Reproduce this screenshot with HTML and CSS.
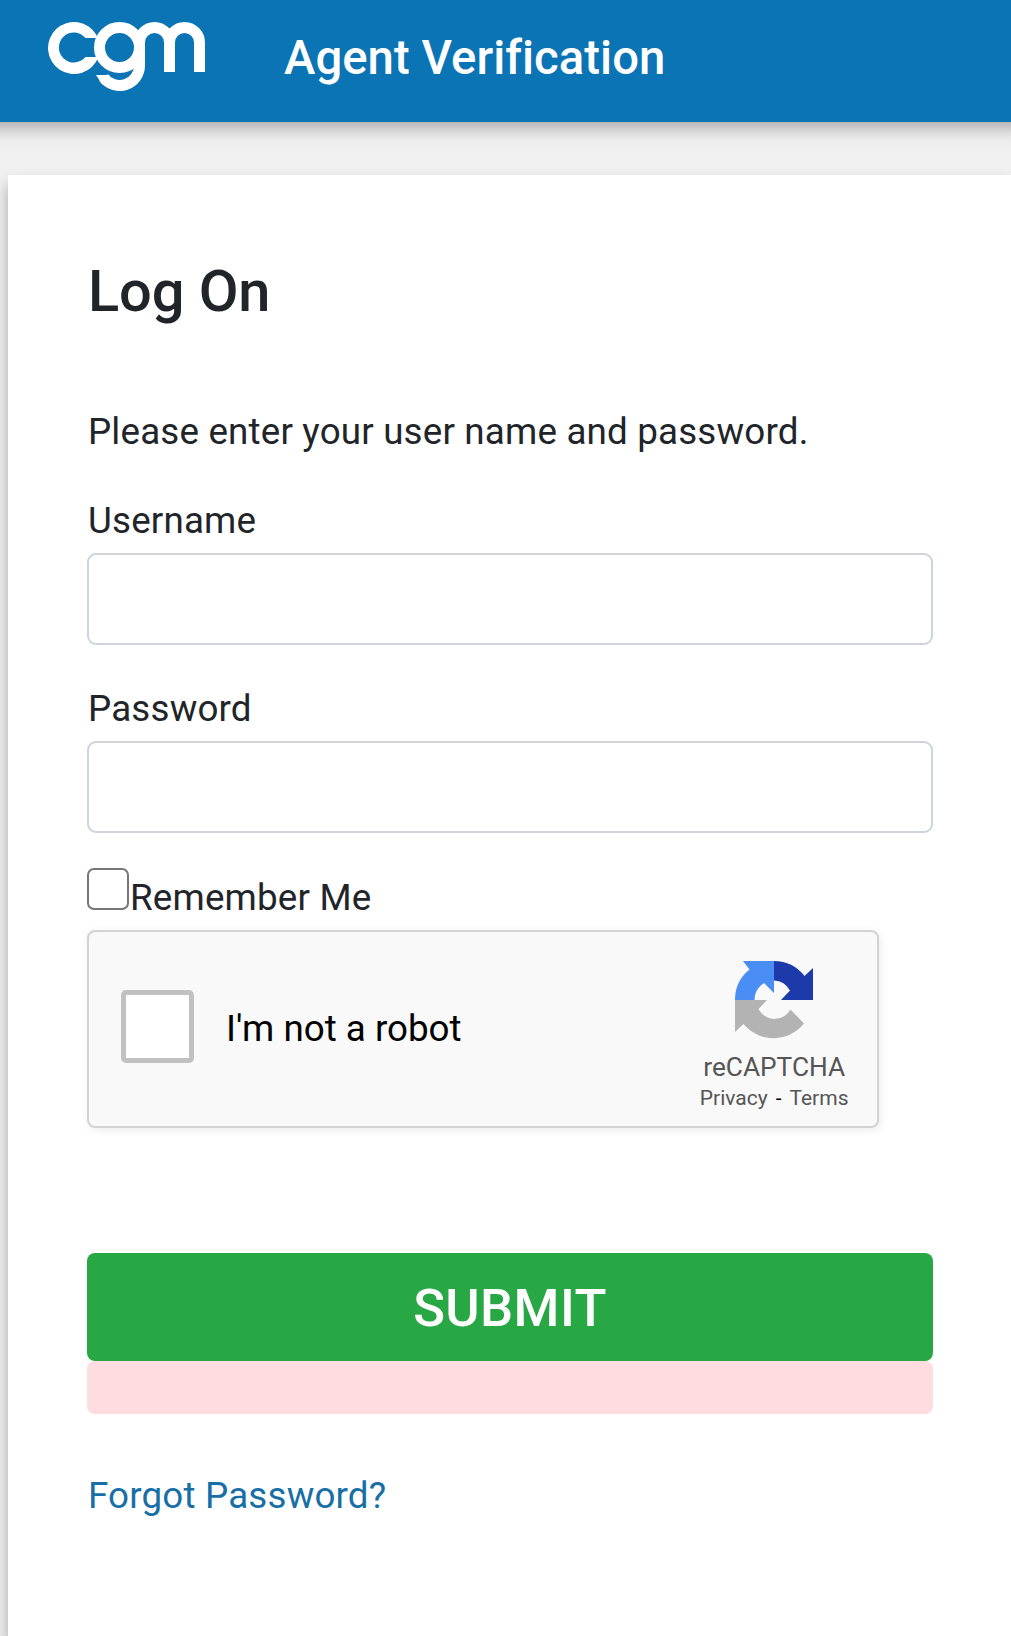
FILE: index.html
```html
<!DOCTYPE html>
<html lang="en">
<head>
<meta charset="utf-8">
<title>Agent Verification</title>
<link rel="stylesheet" href="styles.css">
</head>
<body>
<header class="header">
  <svg class="logo" viewBox="48 22 157 69" width="157" height="69" role="img" aria-label="cgm">
    <path fill="#fff" d="M97 38H85.500A15 15 0 1 0 85.500 57H98.400A26 26 0 1 1 96.500 34.900Z"/>
    <g fill="none" stroke="#fff" stroke-width="11">
      <circle cx="119.500" cy="47.500" r="20"/>
      <path d="M139.500 47V65.500A20 20 0 0 1 103.500 77.500"/>
      <path d="M139.500 50V42.500A15 15 0 0 1 169.500 42.500V72M169.500 50V42.500A15 15 0 0 1 199.500 42.500V72"/>
    </g>
    <path fill="#fff" d="M96 75H109L112 80L102 84Z"/>
  </svg>
  <div class="brand">Agent Verification</div>
</header>
<main class="card">
  <h1 class="title">Log On</h1>
  <p class="intro">Please enter your user name and password.</p>
  <form class="form">
    <div class="field">
      <label class="label" for="user">Username</label>
      <input class="input" id="user" type="text">
    </div>
    <div class="field">
      <label class="label" for="pass">Password</label>
      <input class="input" id="pass" type="password">
    </div>
    <div class="remember">
      <input class="check" id="remember" type="checkbox">
      <label class="remember-label" for="remember">Remember Me</label>
    </div>
    <div class="captcha">
      <span class="captcha-box"></span>
      <span class="captcha-text">I'm not a robot</span>
      <div class="captcha-brand">
        <svg width="78" height="78" viewBox="0 0 78 78" aria-hidden="true">
          <path fill="#1c3aa9" d="M39 0A39 39 0 0 1 69.500 15L78 7V39H46L55 29.500A19.500 19.500 0 0 0 39 19.500Z"/>
          <path fill="#4a8df5" d="M8 0H39V32L29 22A20 20 0 0 0 19.500 39H0A39 39 0 0 1 14.500 8.500Z"/>
          <path fill="#b3b3b3" d="M0 39H32L23.500 48A19.500 19.500 0 0 0 39 58A20 20 0 0 0 55.500 48.500L69 62.500A39 39 0 0 1 8.500 63L0 71Z"/>
        </svg>
        <div class="captcha-name">reCAPTCHA</div>
        <div class="captcha-links"><span>Privacy</span><span class="dash">-</span><span>Terms</span></div>
      </div>
    </div>
    <button class="submit" type="button">SUBMIT</button>
    <div class="alert"></div>
  </form>
  <a class="forgot">Forgot Password?</a>
</main>
</body>
</html>
```
FILE: styles.css
```css
* {
  box-sizing: border-box;
}

body {
  margin: 0;
  background: #f0f0f0;
  color: #212529;
  font-family: Roboto, sans-serif;
  font-size: 36.75px;
  line-height: 55px;
  letter-spacing: 0.18px;
  overflow: hidden;
}

.header {
  display: flex;
  align-items: flex-start;
  height: 122px;
  padding: 22px 0 0 48px;
  background: #0b74b5;
  box-shadow: 0 -10px 16px 16px rgba(0, 0, 0, 0.3);
}

.logo {
  flex: none;
}

.brand {
  margin: 8px 0 0 79px;
  color: #fff;
  font-size: 47.25px;
  font-weight: 500;
  line-height: 56px;
  letter-spacing: 0.05px;
  white-space: nowrap;
}

.card {
  height: 1461px;
  margin: 53px 0 0 8px;
  padding: 81px 78px 0 79px;
  background: #fff;
  box-shadow: 0 10px 14px rgba(0, 0, 0, 0.3);
}

.title {
  margin: 0 0 78px;
  padding-left: 1px;
  font-size: 57.75px;
  font-weight: 500;
  line-height: 70px;
  letter-spacing: -0.1px;
}

.intro {
  margin: 0 0 34px;
  padding-left: 1px;
}

.field {
  margin-bottom: 36px;
}

.label {
  display: block;
  margin-bottom: 5px;
  padding-left: 1px;
}

.input {
  display: block;
  width: 100%;
  height: 92px;
  margin: 0;
  padding: 0 24px;
  border: 2px solid #ced4da;
  border-radius: 9px;
  background: #fff;
  font: inherit;
}

.remember {
  display: flex;
  align-items: flex-start;
  height: 57px;
  margin: -1px 0 5px;
}

.check {
  appearance: none;
  width: 42px;
  height: 42px;
  margin: 0;
  border: 2px solid #767676;
  border-radius: 7px;
  background: #fff;
}

.remember-label {
  margin: 2px 0 0 1px;
}

.captcha {
  display: flex;
  width: 792px;
  height: 198px;
  padding-left: 32px;
  border: 2px solid #d3d3d3;
  border-radius: 8px;
  background: #f9f9f9;
  box-shadow: 2px 2px 8px rgba(0, 0, 0, 0.08);
  color: #000;
}

.captcha-box {
  width: 73px;
  height: 73px;
  margin-top: 58px;
  border: 5px solid #c1c1c1;
  border-radius: 5px;
  background: #fff;
}

.captcha-text {
  margin: 69px 0 0 32px;
  letter-spacing: 0;
}

.captcha-brand {
  display: flex;
  flex-direction: column;
  align-items: center;
  margin: 29px 28.5px 0 auto;
  color: #555;
  letter-spacing: 0;
}

.captcha-name {
  margin-top: 12px;
  font-size: 26.25px;
  line-height: 32px;
}

.captcha-links {
  display: flex;
  gap: 8px;
  font-size: 21px;
  line-height: 30px;
}

.dash {
  color: #000;
}

.submit {
  display: block;
  width: 100%;
  height: 108px;
  margin-top: 125px;
  padding: 2px 0 0;
  border: 0;
  border-radius: 8px;
  background: #28a745;
  color: #fff;
  font: 500 52.5px/106px Roboto, sans-serif;
  letter-spacing: 0.4px;
}

.alert {
  height: 53px;
  border-radius: 8px;
  background: #ffdce0;
}

.forgot {
  display: block;
  margin-top: 54px;
  padding-left: 1px;
  color: #176fa6;
}
```
